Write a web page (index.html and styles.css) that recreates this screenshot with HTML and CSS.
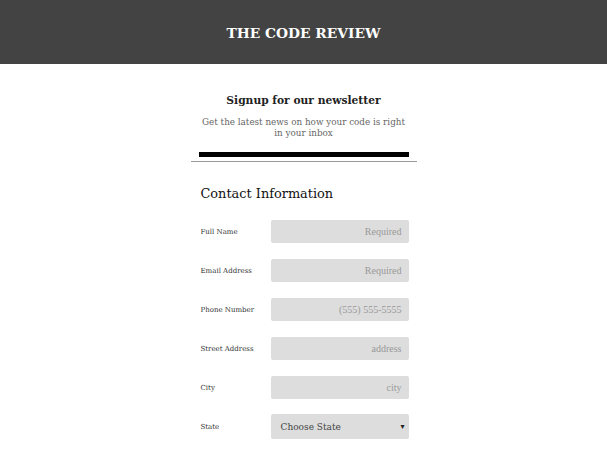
FILE: index.html
```html
<!DOCTYPE html>
<html lang="en">
<head>
<meta charset="utf-8">
<title>The Code Review</title>
<link rel="stylesheet" href="styles.css">
</head>
<body>
<header class="site-header">
  <h1 class="site-title">THE CODE REVIEW</h1>
</header>
<main class="content">
  <section class="intro">
    <h2 class="intro-title">Signup for our newsletter</h2>
    <p class="intro-text">Get the latest news on how your code is right in your inbox</p>
  </section>
  <div class="bar"></div>
  <div class="rule"></div>
  <form class="form">
    <h3 class="form-title">Contact Information</h3>
    <div class="row"><label class="label">Full Name</label><input class="field" type="text" placeholder="Required"></div>
    <div class="row"><label class="label">Email Address</label><input class="field" type="text" placeholder="Required"></div>
    <div class="row"><label class="label">Phone Number</label><input class="field" type="text" placeholder="(555) 555-5555"></div>
    <div class="row"><label class="label">Street Address</label><input class="field" type="text" placeholder="address"></div>
    <div class="row"><label class="label">City</label><input class="field" type="text" placeholder="city"></div>
    <div class="row"><label class="label">State</label><div class="select"><span>Choose State</span><span class="caret">▾</span></div></div>
  </form>
</main>
</body>
</html>
```
FILE: styles.css
```css
* { box-sizing: border-box; }
body {
  margin: 0;
  font-family: "DejaVu Serif", "Liberation Serif", serif;
  color: #222;
  background: #fff;
}
.site-header {
  height: 64px;
  background: #434343;
  display: flex;
  align-items: center;
  justify-content: center;
}
.site-title {
  margin: 1px 0 0;
  color: #fff;
  font-size: 13.8px;
  font-weight: bold;
}
.content {
  width: 226px;
  margin: 0 auto;
}
.intro {
  text-align: center;
  padding-top: 30px;
}
.intro-title {
  margin: 0;
  font-size: 10.7px;
  font-weight: bold;
  color: #222;
}
.intro-text {
  margin: 10px 9px 0;
  font-size: 8.8px;
  line-height: 11px;
  color: #666;
}
.bar {
  width: 210px;
  height: 5px;
  background: #000;
  margin: 13px auto 0;
}
.rule {
  height: 1px;
  background: #999;
  margin-top: 4px;
}
.form {
  padding: 0 8px 0 10px;
}
.form-title {
  margin: 24px 0 19px;
  font-size: 12.9px;
  font-weight: normal;
  color: #111;
}
.row {
  display: flex;
  align-items: center;
  height: 23px;
  margin-bottom: 16px;
}
.label {
  width: 70px;
  font-size: 7px;
  color: #333;
}
.field, .select {
  width: 138px;
  height: 23px;
  border: none;
  border-radius: 2px;
  background: #ddd;
  font-family: "Liberation Serif", serif;
  font-size: 10px;
  color: #555;
  text-align: right;
  padding: 0 7px;
}
.field::placeholder { color: #999; }
.select {
  display: flex;
  align-items: center;
  justify-content: space-between;
  height: 25px;
  padding: 0 4px 0 10px;
  text-align: left;
  font-family: "DejaVu Serif", serif;
  font-size: 9px;
  color: #444;
}
.caret { font-size: 8px; color: #222; }
```
